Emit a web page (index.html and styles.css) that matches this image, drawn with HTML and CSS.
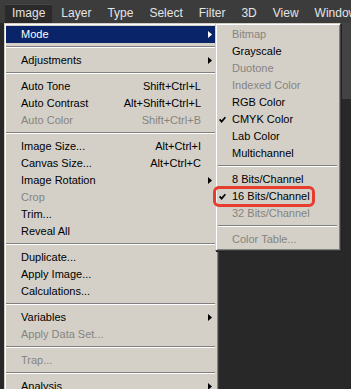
FILE: index.html
```html
<!DOCTYPE html>
<html lang="en">
<head>
  <meta charset="UTF-8">
  <meta name="viewport" content="width=device-width, initial-scale=1.0">
  <title>Image Menu</title>
  <link rel="stylesheet" href="styles.css">
</head>
<body>
  <!-- Application menu bar -->
  <div class="menubar">
    <span class="bar-item open">Image</span>
    <span class="bar-item">Layer</span>
    <span class="bar-item">Type</span>
    <span class="bar-item">Select</span>
    <span class="bar-item">Filter</span>
    <span class="bar-item">3D</span>
    <span class="bar-item">View</span>
    <span class="bar-item">Window</span>
  </div>

  <div class="workspace">
    <div class="side-strip"></div>

    <!-- Image menu -->
    <div class="menu main-menu">
      <div class="item active"><span>Mode</span><span></span><svg class="arrow" viewBox="0 0 4 7"><polygon points="0,0 4,3.5 0,7"/></svg></div>
      <div class="sep"></div>
      <div class="item"><span>Adjustments</span><span></span><svg class="arrow" viewBox="0 0 4 7"><polygon points="0,0 4,3.5 0,7"/></svg></div>
      <div class="sep"></div>
      <div class="item"><span>Auto Tone</span><span class="key">Shift+Ctrl+L</span></div>
      <div class="item"><span>Auto Contrast</span><span class="key">Alt+Shift+Ctrl+L</span></div>
      <div class="item disabled"><span>Auto Color</span><span class="key">Shift+Ctrl+B</span></div>
      <div class="sep"></div>
      <div class="item"><span>Image Size...</span><span class="key">Alt+Ctrl+I</span></div>
      <div class="item"><span>Canvas Size...</span><span class="key">Alt+Ctrl+C</span></div>
      <div class="item"><span>Image Rotation</span><span></span><svg class="arrow" viewBox="0 0 4 7"><polygon points="0,0 4,3.5 0,7"/></svg></div>
      <div class="item disabled"><span>Crop</span></div>
      <div class="item"><span>Trim...</span></div>
      <div class="item"><span>Reveal All</span></div>
      <div class="sep"></div>
      <div class="item"><span>Duplicate...</span></div>
      <div class="item"><span>Apply Image...</span></div>
      <div class="item"><span>Calculations...</span></div>
      <div class="sep"></div>
      <div class="item"><span>Variables</span><span></span><svg class="arrow" viewBox="0 0 4 7"><polygon points="0,0 4,3.5 0,7"/></svg></div>
      <div class="item disabled"><span>Apply Data Set...</span></div>
      <div class="sep"></div>
      <div class="item disabled"><span>Trap...</span></div>
      <div class="sep"></div>
      <div class="item"><span>Analysis</span><span></span><svg class="arrow" viewBox="0 0 4 7"><polygon points="0,0 4,3.5 0,7"/></svg></div>
    </div>

    <!-- Mode submenu -->
    <div class="menu sub-menu">
      <div class="sub-item disabled"><span></span><span>Bitmap</span></div>
      <div class="sub-item"><span></span><span>Grayscale</span></div>
      <div class="sub-item disabled"><span></span><span>Duotone</span></div>
      <div class="sub-item disabled"><span></span><span>Indexed Color</span></div>
      <div class="sub-item"><span></span><span>RGB Color</span></div>
      <div class="sub-item"><svg class="check" viewBox="0 0 7 7"><polyline points="0.6,3.4 2.6,5.6 6.4,1.2"/></svg><span>CMYK Color</span></div>
      <div class="sub-item"><span></span><span>Lab Color</span></div>
      <div class="sub-item"><span></span><span>Multichannel</span></div>
      <div class="sep"></div>
      <div class="sub-item"><span></span><span>8 Bits/Channel</span></div>
      <div class="sub-item marked"><svg class="check" viewBox="0 0 7 7"><polyline points="0.6,3.4 2.6,5.6 6.4,1.2"/></svg><span>16 Bits/Channel</span></div>
      <div class="sub-item disabled"><span></span><span>32 Bits/Channel</span></div>
      <div class="sep"></div>
      <div class="sub-item disabled"><span></span><span>Color Table...</span></div>
    </div>
  </div>
</body>
</html>
```

FILE: styles.css
```css
/* General */
body {
  margin: 0;
  height: 389px;
  overflow: hidden;
  background-color: #282828;
  font-family: "Liberation Sans", Arial, sans-serif;
}

/* Menu bar */
.menubar {
  display: flex;
  height: 23px;
  padding: 4px 0 0 4px;
  box-sizing: border-box;
  background-color: #3c3c3c;
  white-space: nowrap;
}

.bar-item {
  padding: 0 8px;
  height: 19px;
  line-height: 19px;
  font-size: 12px;
  color: #e4e4e4;
}

.bar-item.open {
  background-color: #2a2a2a;
  border-radius: 2px 2px 0 0;
  box-shadow: inset 0 1px 0 #474747, inset 1px 0 0 #3a3a3a, inset -1px 0 0 #3a3a3a;
}

/* Area under the bar */
.workspace {
  position: relative;
  height: 366px;
}

.side-strip {
  position: absolute;
  top: 0;
  right: 0;
  width: 10px;
  height: 76px;
  background-color: #434343;
  border-left: 1px solid #333;
}

/* Shared menu frame (classic 3D look) */
.menu {
  background-color: #d4d0c8;
  border: 1px solid;
  border-color: #d4d0c8 #404040 #404040 #d4d0c8;
  box-shadow: inset 1px 1px 0 #fff, inset -1px -1px 0 #808080;
  font-size: 11px;
  color: #000;
}

.main-menu {
  width: 215px;
  margin-left: 4px;
  box-sizing: border-box;
  padding: 2px 3px 2px 1px;
  height: 400px;
}

.sub-menu {
  position: absolute;
  top: 0;
  left: 215px;
  width: 126px;
  box-sizing: border-box;
  padding: 2px 3px 2px 2px;
  box-shadow: inset 1px 1px 0 #fff, inset -1px -1px 0 #808080, 1px 1px 0 #222;
}

/* Items */
.item {
  display: grid;
  grid-template-columns: 1fr auto 14px;
  align-items: center;
  height: 17px;
  line-height: 17px;
  padding-left: 15px;
  white-space: nowrap;
}

.item .arrow {
  width: 4px;
  height: 7px;
  margin-left: 7px;
  fill: #000;
}

.item.active {
  background-color: #0a246a;
  color: #fff;
}

.item.active .arrow {
  fill: #fff;
}

.sub-item {
  position: relative;
  display: grid;
  grid-template-columns: 14px 1fr;
  align-items: center;
  height: 17px;
  line-height: 17px;
  white-space: nowrap;
}

.check {
  width: 7px;
  height: 7px;
  margin-left: 1px;
  fill: none;
  stroke: #000;
  stroke-width: 1.7;
}

.disabled {
  color: #86847f;
}

/* Separators */
.sep {
  height: 9px;
  box-sizing: border-box;
  padding-top: 3px;
}

.sep::before {
  content: "";
  display: block;
  height: 1px;
  background-color: #808080;
  border-bottom: 1px solid #fff;
}

/* Red callout around the checked depth */
.sub-item.marked::after {
  content: "";
  position: absolute;
  left: -5px;
  top: -2px;
  width: 102px;
  height: 21px;
  box-sizing: border-box;
  border: 3px solid #e63d2e;
  border-radius: 6px;
}
```
